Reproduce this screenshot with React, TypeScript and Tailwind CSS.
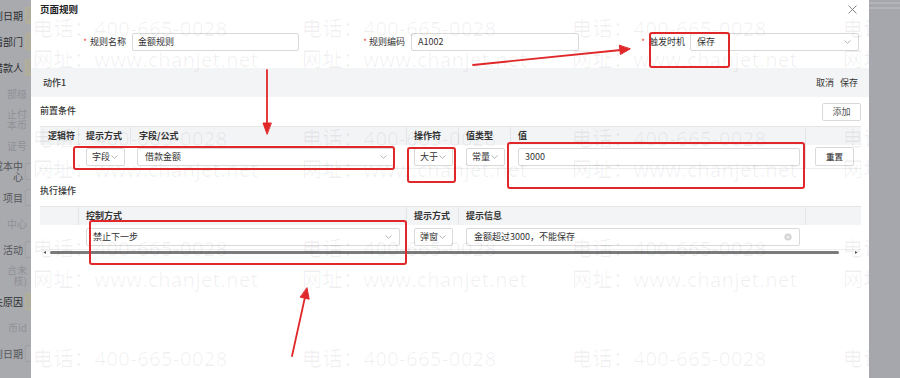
const font = "font-['Noto_Sans_CJK_SC',sans-serif]";

const Chevron = () => (
  <svg width="7" height="4" viewBox="0 0 7 4" className="shrink-0">
    <path d="M0.5 0.5 L3.5 3.3 L6.5 0.5" fill="none" stroke="#a3a3a3" strokeWidth="0.8" />
  </svg>
);

const sideRows = [
  { t: ["到日期"], c: "text-[#2d2e31]", box: "y" },
  { t: ["请部门"], c: "text-[#2d2e31]", box: "y" },
  { t: ["借款人"], c: "text-[#2d2e31]", box: "y" },
  { t: ["部级"], c: "text-[#8f9095]", box: "" },
  { t: ["止付", "本币"], c: "text-[#8f9095]", box: "" },
  { t: ["证号"], c: "text-[#8f9095]", box: "" },
  { t: ["成本中", "心"], c: "text-[#55565a]", box: "g" },
  { t: ["项目"], c: "text-[#55565a]", box: "g" },
  { t: ["中心"], c: "text-[#8f9095]", box: "" },
  { t: ["活动"], c: "text-[#55565a]", box: "g" },
  { t: ["合未", "核)"], c: "text-[#8f9095]", box: "" },
  { t: ["失原因"], c: "text-[#2d2e31]", box: "y" },
  { t: ["币id"], c: "text-[#8f9095]", box: "" },
  { t: ["到日期"], c: "text-[#55565a]", box: "g" },
];

const SmallSelect = ({ text }: { text: string }) => (
  <div className="w-[39px] h-[18px] border border-[#d9d9d9] rounded-[2px] flex items-center gap-[1px] pl-[5px] text-[9px] text-[#333] bg-white">
    <span>{text}</span>
    <Chevron />
  </div>
);

const watermarkRows = [
  { top: "top-[19px]", text: "电话：400-665-0028" },
  { top: "top-[50px]", text: "网址：www.chanjet.net" },
  { top: "top-[129px]", text: "电话：400-665-0028" },
  { top: "top-[160px]", text: "网址：www.chanjet.net" },
  { top: "top-[239px]", text: "电话：400-665-0028" },
  { top: "top-[270px]", text: "网址：www.chanjet.net" },
  { top: "top-[349px]", text: "电话：400-665-0028" },
];

const watermarkCols = ["left-[2px]", "left-[271px]", "left-[541px]", "left-[812px]"];

export default function App() {
  return (
    <div className={`relative w-[900px] h-[378px] flex overflow-hidden bg-white ${font}`}>
      {/* page behind the mask */}
      <div className="w-[31px] shrink-0 h-full bg-[#a9aaae] overflow-hidden pt-[2px]">
        {sideRows.map((r, i) => (
          <div key={i} className="h-[26px] flex items-center justify-end">
            <div className={`text-[10px] leading-[11px] text-right whitespace-nowrap ${r.c}`}>
              {r.t.map((l, j) => (
                <div key={j}>{l}</div>
              ))}
            </div>
            {r.box === "y" && (
              <div className="ml-[2px] w-[6px] h-[17px] shrink-0 rounded-l-[3px] border border-r-0 border-[#b7b196] bg-[#aeab9f]" />
            )}
            {r.box === "g" && (
              <div className="ml-[2px] w-[6px] h-[17px] shrink-0 rounded-l-[3px] border border-r-0 border-[#9fa0a4] bg-[#abacb0]" />
            )}
            {r.box === "" && <div className="w-[4px] shrink-0" />}
          </div>
        ))}
      </div>

      {/* modal */}
      <div className="relative w-[838px] shrink-0 h-full overflow-hidden bg-white pl-[9px] pr-[8px]">
        <div className="flex items-center justify-between h-[18px]">
          <span className="text-[9.5px] leading-[12px] font-bold text-[#222]">页面规则</span>
          <svg width="9" height="9" viewBox="0 0 9 9" className="mr-[4px]">
            <path d="M0.5 0.5 L8.5 8.5 M8.5 0.5 L0.5 8.5" stroke="#777" strokeWidth="0.9" />
          </svg>
        </div>

        <div className="mt-[15px] flex h-[18px] text-[9px] text-[#333]">
          <div className="w-[92px] flex items-center justify-end pr-[6px]">
            <span className="text-[#f04134] mr-[3px] text-[8px]">*</span>规则名称
          </div>
          <div className="w-[167px] border border-[#d9d9d9] rounded-[2px] flex items-center pl-[5px]">金额规则</div>
          <div className="w-[112px] flex items-center justify-end pr-[6px]">
            <span className="text-[#f04134] mr-[2px] text-[8px]">*</span>规则编码
          </div>
          <div className="w-[168px] border border-[#d9d9d9] rounded-[2px] flex items-center pl-[6px]">A1002</div>
          <div className="w-[111px] flex items-center justify-end pr-[5px]">
            <span className="text-[#f04134] mr-[4px] text-[8px]">*</span>触发时机
          </div>
          <div className="w-[169px] border border-[#d9d9d9] rounded-[2px] flex items-center justify-between pl-[6px] pr-[7px]">
            <span>保存</span>
            <Chevron />
          </div>
        </div>

        <div className="mt-[17px] -ml-[9px] -mr-[8px] h-[29px] bg-[#f3f4f6] flex items-center justify-between pl-[12px] pr-[11px] text-[9px] text-[#333]">
          <span className="font-medium">动作1</span>
          <div className="flex gap-[6px]">
            <span>取消</span>
            <span>保存</span>
          </div>
        </div>

        <div className="mt-[6px] h-[18px] flex items-center justify-between">
          <span className="text-[9px] font-medium text-[#333] -mt-[2px]">前置条件</span>
          <div className="w-[39px] h-[18px] border border-[#d9d9d9] rounded-[2px] flex items-center justify-center text-[9px] text-[#555]">
            添加
          </div>
        </div>

        {/* condition table */}
        <div className="mt-[5px] text-[9px] text-[#333]">
          <div className="flex h-[19px] bg-[#f3f4f6] border-t border-[#e3e5e8] font-bold">
            <div className="w-[39px] pl-[8px] flex items-center border-r border-[#e3e5e8]">逻辑符</div>
            <div className="w-[52px] pl-[7px] flex items-center border-r border-[#e3e5e8]">提示方式</div>
            <div className="w-[276px] pl-[8px] flex items-center border-r border-[#e3e5e8]">字段/公式</div>
            <div className="w-[52px] pl-[7px] flex items-center border-r border-[#e3e5e8]">操作符</div>
            <div className="w-[52px] pl-[7px] flex items-center border-r border-[#e3e5e8]">值类型</div>
            <div className="w-[295px] pl-[7px] flex items-center border-r border-[#e3e5e8]">值</div>
            <div className="w-[55px]" />
          </div>
          <div className="flex h-[24px] items-center border-b border-[#eceef1]">
            <div className="w-[39px]" />
            <div className="w-[52px] pl-[7px]">
              <SmallSelect text="字段" />
            </div>
            <div className="w-[276px] pl-[6px]">
              <div className="w-[257px] h-[18px] border border-[#d9d9d9] rounded-[2px] flex items-center justify-between pl-[7px] pr-[6px]">
                <span>借款金额</span>
                <Chevron />
              </div>
            </div>
            <div className="w-[52px] pl-[7px]">
              <SmallSelect text="大于" />
            </div>
            <div className="w-[52px] pl-[7px]">
              <SmallSelect text="常量" />
            </div>
            <div className="w-[295px] pl-[7px] h-full flex items-center border-r border-[#e3e5e8]">
              <div className="w-[282px] h-[18px] border border-[#d9d9d9] rounded-[2px] flex items-center pl-[6px]">3000</div>
            </div>
            <div className="w-[55px] pl-[9px]">
              <div className="w-[39px] h-[19px] border border-[#d9d9d9] rounded-[2px] flex items-center justify-center text-[8.5px] font-medium text-[#444]">
                重置
              </div>
            </div>
          </div>
        </div>

        <div className="mt-[16px] text-[9px] leading-[12px] font-medium text-[#333]">执行操作</div>

        {/* action table */}
        <div className="mt-[9px] text-[9px] text-[#333]">
          <div className="flex h-[19px] bg-[#f3f4f6] border-t border-[#e3e5e8] font-bold">
            <div className="w-[39px] border-r border-[#e3e5e8]" />
            <div className="w-[328px] pl-[7px] flex items-center border-r border-[#e3e5e8]">控制方式</div>
            <div className="w-[52px] pl-[7px] flex items-center border-r border-[#e3e5e8]">提示方式</div>
            <div className="w-[347px] pl-[7px] flex items-center border-r border-[#e3e5e8]">提示信息</div>
            <div className="w-[55px]" />
          </div>
          <div className="flex h-[25px] items-center border-b border-[#eceef1]">
            <div className="w-[39px]" />
            <div className="w-[328px] pl-[7px]">
              <div className="w-[314px] h-[18px] border border-[#d9d9d9] rounded-[2px] flex items-center justify-between pl-[6px] pr-[7px]">
                <span>禁止下一步</span>
                <Chevron />
              </div>
            </div>
            <div className="w-[52px] pl-[7px]">
              <SmallSelect text="弹窗" />
            </div>
            <div className="w-[347px] pl-[7px]">
              <div className="w-[334px] h-[18px] border border-[#d9d9d9] rounded-[2px] flex items-center justify-between pl-[7px] pr-[7px]">
                <span>金额超过3000，不能保存</span>
                <svg width="8" height="8" viewBox="0 0 8 8">
                  <circle cx="4" cy="4" r="3.6" fill="#d4d4d4" />
                  <path d="M2.6 2.6 L5.4 5.4 M5.4 2.6 L2.6 5.4" stroke="#fff" strokeWidth="0.8" />
                </svg>
              </div>
            </div>
            <div className="w-[55px]" />
          </div>
          <div className="flex h-[5px] items-center">
            <svg width="6" height="5" viewBox="0 0 6 5" className="ml-[2px]">
              <path d="M1.5 2.5 L4 1 L4 4 Z" fill="#555" />
            </svg>
            <div className="ml-[2px] w-[789px] h-[3px] rounded-full bg-[#7b7b7b]" />
            <svg width="6" height="5" viewBox="0 0 6 5" className="ml-[14px]">
              <path d="M4.5 2.5 L2 1 L2 4 Z" fill="#555" />
            </svg>
          </div>
        </div>

        {/* watermark */}
        <div className="absolute inset-0 pointer-events-none font-['Open_Sans','Noto_Sans_CJK_SC',sans-serif] text-[20px] leading-[20px] tracking-[0.5px] text-black/[0.06] whitespace-nowrap">
          {watermarkRows.map((r, i) =>
            watermarkCols.map((c, j) => (
              <div key={`${i}-${j}`} className={`absolute ${r.top} ${c}`}>
                {r.text}
              </div>
            ))
          )}
        </div>
      </div>

      <div className="flex-1 h-full bg-[#a6a7ac] flex flex-col pt-[2px] gap-[3px]">
        <div className="h-[2px] bg-[#b3b4b8]" />
        <div className="h-[2px] bg-[#b3b4b8]" />
      </div>

      {/* annotations */}
      <svg className="absolute inset-0 pointer-events-none" width="900" height="378" viewBox="0 0 900 378">
        <g fill="none" stroke="#e0282a" strokeWidth="2">
          <rect x="74" y="147" width="320" height="22" rx="2" />
          <rect x="408" y="148" width="47" height="34" rx="2" />
          <rect x="508" y="143" width="296" height="45" rx="2" />
          <rect x="90" y="221" width="316" height="43" rx="2" />
          <rect x="650" y="33" width="79" height="34" rx="2" />
        </g>
        <g fill="#e0282a" stroke="#e0282a" strokeLinecap="round">
          <line x1="267" y1="70" x2="267" y2="126" strokeWidth="1.8" />
          <path d="M267 134 L263 123 L271 123 Z" />
          <line x1="473" y1="65" x2="621" y2="50" strokeWidth="1.8" />
          <path d="M630 49 L620.4 54.5 L619.4 45.5 Z" />
          <line x1="292" y1="356" x2="305" y2="297" strokeWidth="1.8" />
          <path d="M307 288 L309.2 299.2 L300.5 297.2 Z" />
        </g>
      </svg>
    </div>
  );
}
